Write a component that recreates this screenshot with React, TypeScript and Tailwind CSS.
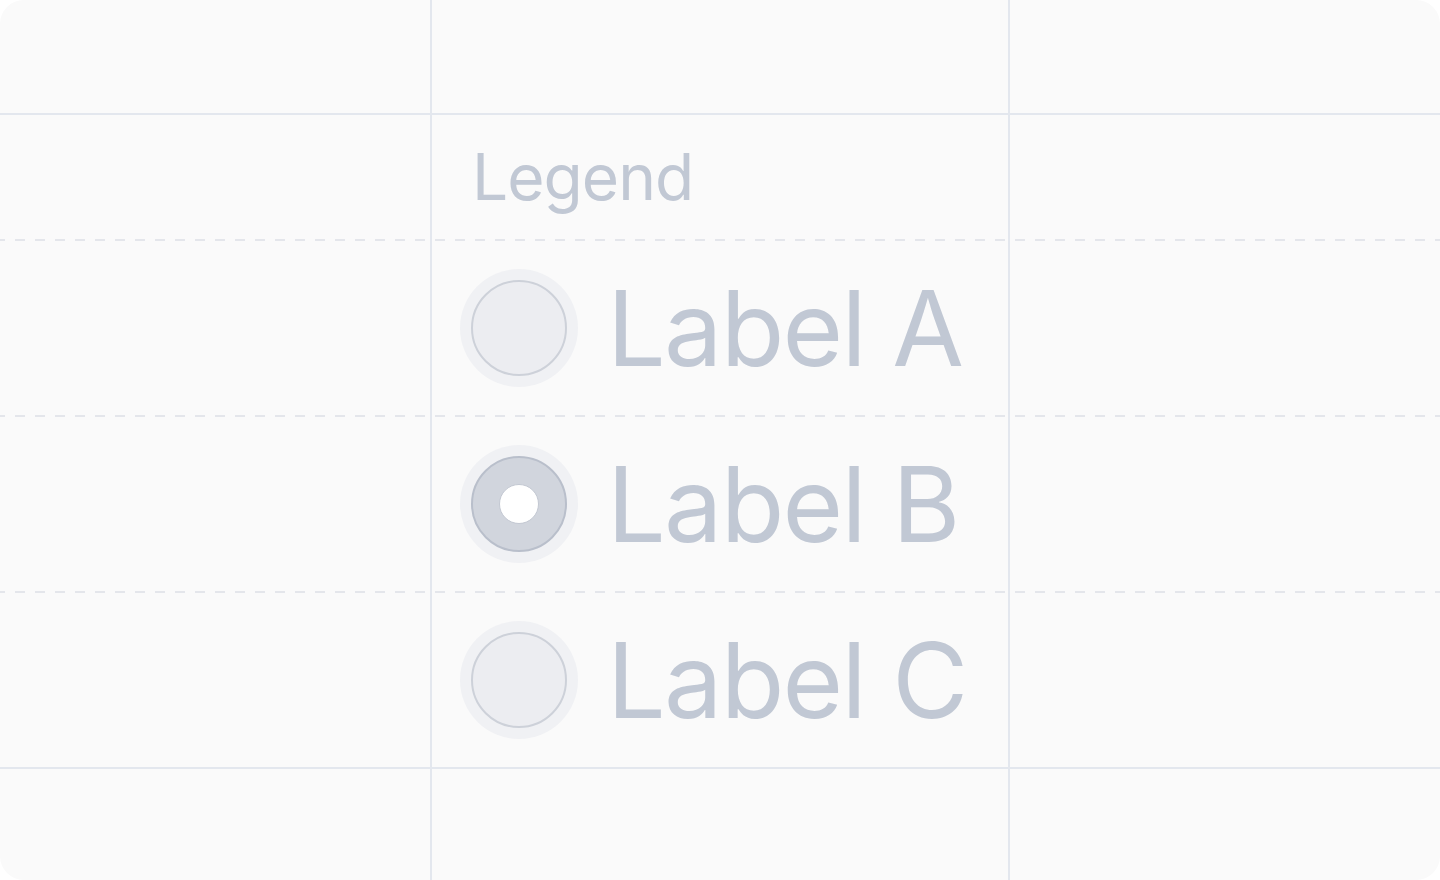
import React from 'react';

const options = [
  { id: 'a', label: 'Label A', checked: false },
  { id: 'b', label: 'Label B', checked: true },
  { id: 'c', label: 'Label C', checked: false },
];

const Dashed: React.FC = () => (
  <div className="col-span-full h-[2px] bg-[repeating-linear-gradient(90deg,#e4e6eb_0_5px,transparent_5px_15px,#e4e6eb_15px_20px)]" />
);

const Solid: React.FC = () => <div className="col-span-full h-[2px] bg-[#e3e7ee]" />;

const Radio: React.FC<{ checked: boolean }> = ({ checked }) => (
  <div
    className={`w-24 h-24 shrink-0 rounded-full border-2 ring-[11px] ring-[#f0f1f4] flex items-center justify-center ${
      checked ? 'bg-[#d1d5dd] border-[#b9bfcb]' : 'bg-[#ecedf1] border-[#cdd1d9]'
    }`}
  >
    {checked && <div className="w-10 h-10 rounded-full bg-white border border-[#c3c8d2]" />}
  </div>
);

const App: React.FC = () => {
  return (
    <div className="w-[1440px] h-[880px] bg-white" style={{ fontFamily: 'Inter, "Liberation Sans", sans-serif' }}>
      <div className="relative w-full h-full rounded-3xl overflow-hidden bg-[#fafafa] grid grid-cols-[430px_2px_576px_2px_1fr] grid-rows-[113px_2px_124px_2px_174px_2px_174px_2px_174px_2px_1fr]">
        {/* vertical lines */}
        <div className="col-start-2 row-start-1 row-span-11 bg-[#e3e7ee] z-10" />
        <div className="col-start-4 row-start-1 row-span-11 bg-[#e3e7ee] z-10" />

        <div className="col-span-full row-start-1" />
        <div className="col-span-full row-start-2"><Solid /></div>

        {/* legend */}
        <div className="col-start-3 row-start-3 flex items-center pl-[40px]">
          <span className="text-[64px] leading-none text-[#c1c8d4] tracking-[-0.015em]">Legend</span>
        </div>
        <div className="col-span-full row-start-4"><Dashed /></div>

        {options.map((opt, i) => (
          <React.Fragment key={opt.id}>
            <div
              className={`col-start-3 flex items-center gap-10 pl-[39px] ${
                i === 0 ? 'row-start-5' : i === 1 ? 'row-start-7' : 'row-start-9'
              }`}
            >
              <Radio checked={opt.checked} />
              <span className="text-[104px] leading-none text-[#c1c8d4] tracking-[-0.017em] whitespace-nowrap">{opt.label}</span>
            </div>
            <div className={`col-span-full ${i === 0 ? 'row-start-6' : i === 1 ? 'row-start-8' : 'row-start-10'}`}>
              {i < 2 ? <Dashed /> : <Solid />}
            </div>
          </React.Fragment>
        ))}

        <div className="col-span-full row-start-11" />
      </div>
    </div>
  );
};

export default App;
